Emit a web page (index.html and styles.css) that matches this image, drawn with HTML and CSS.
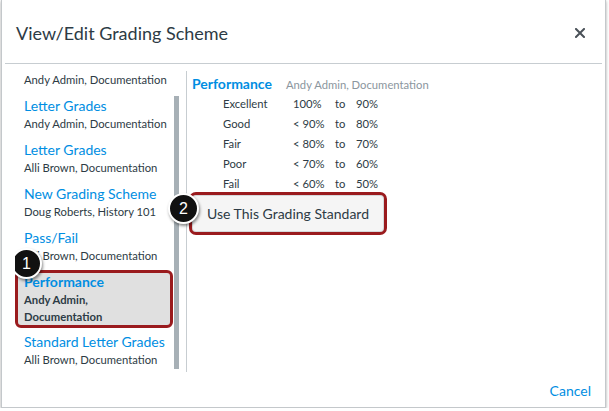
FILE: index.html
```html
<!DOCTYPE html>
<html>
<head>
<meta charset="utf-8">
<link rel="stylesheet" href="styles.css">
</head>
<body>
<div class="dialog">
  <div class="header">
    <h1 class="title">View/Edit Grading Scheme</h1>
    <svg class="close" width="10" height="10" viewBox="0 0 10 10"><path d="M1 1L9 9M9 1L1 9" stroke="#4a5158" stroke-width="2" stroke-linecap="square"/></svg>
  </div>
  <div class="body">
    <div class="left">
      <div class="list">
        <div class="item partial"><div class="sub">Andy Admin, Documentation</div></div>
        <div class="item"><div class="name">Letter Grades</div><div class="sub">Andy Admin, Documentation</div></div>
        <div class="item"><div class="name">Letter Grades</div><div class="sub">Alli Brown, Documentation</div></div>
        <div class="item"><div class="name">New Grading Scheme</div><div class="sub">Doug Roberts, History 101</div></div>
        <div class="item"><div class="name">Pass/Fail</div><div class="sub">Alli Brown, Documentation</div></div>
        <div class="item selected"><div class="name">Performance</div><div class="sub">Andy Admin,<br>Documentation</div>
          <span class="badge badge-1">1</span>
        </div>
        <div class="item"><div class="name">Standard Letter Grades</div><div class="sub">Alli Brown, Documentation</div></div>
      </div>
      <div class="scrollbar"><div class="thumb"></div></div>
    </div>
    <div class="right">
      <div class="scheme-head"><span class="scheme-name">Performance</span><span class="scheme-owner">Andy Admin, Documentation</span></div>
      <div class="grades">
        <div class="row"><span class="c1">Excellent</span><span class="c2">100%</span><span class="c3">to</span><span class="c4">90%</span></div>
        <div class="row"><span class="c1">Good</span><span class="c2">&lt; 90%</span><span class="c3">to</span><span class="c4">80%</span></div>
        <div class="row"><span class="c1">Fair</span><span class="c2">&lt; 80%</span><span class="c3">to</span><span class="c4">70%</span></div>
        <div class="row"><span class="c1">Poor</span><span class="c2">&lt; 70%</span><span class="c3">to</span><span class="c4">60%</span></div>
        <div class="row"><span class="c1">Fail</span><span class="c2">&lt; 60%</span><span class="c3">to</span><span class="c4">50%</span></div>
      </div>
      <div class="btn-wrap">
        <div class="btn">Use This Grading Standard</div>
        <span class="badge badge-2">2</span>
      </div>
    </div>
  </div>
  <div class="footer"><span class="cancel">Cancel</span></div>
</div>
</body>
</html>
```
FILE: styles.css
```css
* { box-sizing: border-box; }
html, body { margin: 0; padding: 0; background: #fff; }
body { font-family: Lato, "Noto Sans", sans-serif; color: #2d3b45; }

.dialog {
  margin-left: 1px;
  width: 605px;
  height: 408px;
  border: 1px solid #c4c8cb;
  border-top: none;
  box-shadow: 0 1px 3px rgba(0,0,0,0.35);
  display: flex;
  flex-direction: column;
  background: #fff;
}

.header {
  height: 64px;
  margin: 0 3px;
  border-bottom: 1px solid #c7cdd1;
  display: flex;
  align-items: center;
  justify-content: space-between;
  padding: 3px 17px 0 11px;
}
.title {
  margin: 0;
  font-size: 18px;
  font-weight: 400;
  color: #2d3b45;
}
.close { display: block; }

.body {
  display: flex;
  padding-top: 7px;
  height: 309px;
}

.left {
  width: 184px;
  height: 301px;
  display: flex;
  padding-left: 13px;
}
.list {
  width: 158px;
  overflow: hidden;
}
.item {
  position: relative;
  border: 3px solid transparent;
  border-radius: 6px;
  padding: 0 0 1px 6px;
  margin-bottom: 2px;
}
.item.partial { border: none; padding: 0 0 6px 9px; margin: 0; }
.name {
  font-size: 14px;
  line-height: 18px;
  color: #008ee2;
  white-space: nowrap;
}
.sub {
  font-size: 11.25px;
  line-height: 17px;
  color: #2d3b45;
  white-space: nowrap;
}
.item.selected {
  background: #e0e0e0;
  border-color: #9a1b1e;
  padding-bottom: 0;
}
.item.selected .name, .item.selected .sub { font-weight: 700; }

.scrollbar {
  width: 6px;
  margin-left: 1px;
}
.thumb {
  margin-top: 25px;
  height: 273px;
  width: 5px;
  background: #a7b0b6;
}

.right {
  flex: 1;
  height: 301px;
  border-left: 1px solid #c7cdd1;
  padding: 3px 0 0 5px;
}
.scheme-head { line-height: 18px; white-space: nowrap; }
.scheme-name { font-size: 14px; font-weight: 700; color: #008ee2; }
.scheme-owner { font-size: 11.25px; color: #8b969e; margin-left: 14px; }

.grades { padding-left: 31px; }
.row {
  display: flex;
  font-size: 11.25px;
  line-height: 20px;
  white-space: nowrap;
}
.c1 { width: 70px; }
.c2 { width: 42px; }
.c3 { width: 21px; }

.btn-wrap {
  position: relative;
  margin: -2px 0 0 -3px;
  width: 198px;
}
.btn {
  height: 43px;
  border: 3px solid #9a1b1e;
  border-radius: 7px;
  background: #f5f5f5;
  box-shadow: inset 0 0 0 1px #d5d8da;
  font-size: 14px;
  line-height: 37px;
  padding-left: 15px;
  color: #2d3b45;
  white-space: nowrap;
}

.badge {
  position: absolute;
  width: 31px;
  height: 31px;
  border-radius: 50%;
  background: #111;
  border: 2px solid #fff;
  box-shadow: 1px 2px 3px rgba(0,0,0,0.45);
  color: #fff;
  font-size: 16px;
  line-height: 27px;
  text-align: center;
  font-family: "Liberation Sans", Arial, sans-serif;
}
.badge-1 { left: -7px; top: -25px; }
.badge-2 { left: -21px; top: 1px; }

.footer {
  flex: 1;
  display: flex;
  justify-content: flex-end;
  align-items: center;
  padding: 0 14px 0 0;
}
.cancel {
  font-size: 14px;
  color: #008ee2;
}
```
